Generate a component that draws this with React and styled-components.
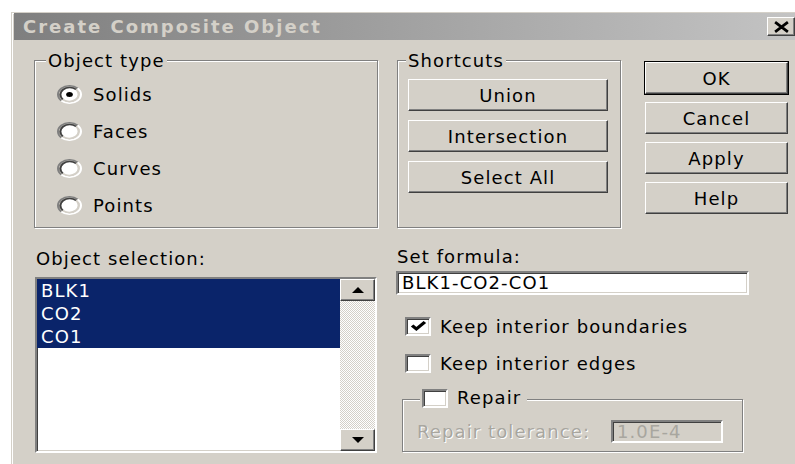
import styled, { createGlobalStyle } from "styled-components";

const GlobalStyle = createGlobalStyle`
  html, body {
    margin: 0;
    padding: 0;
    background: #fff;
    overflow: hidden;
  }
  body {
    font-family: "DejaVu Sans", Verdana, sans-serif;
    font-size: 18px;
    letter-spacing: 1.1px;
    color: #000;
  }
`;

const face = "#d4d0c8";

const raised = `
  border: 1px solid;
  border-color: #fff #404040 #404040 #fff;
  box-shadow: inset -1px -1px 0 #808080;
`;

const sunken = `
  border: 2px solid;
  border-color: #808080 #fff #fff #808080;
  box-shadow: inset 1px 1px 0 #404040, inset -1px -1px 0 ${face};
`;

const Window = styled.div`
  box-sizing: border-box;
  width: 790px;
  height: 470px;
  margin: 12px 0 0 11px;
  padding: 0 0 0 2px;
  background: ${face};
  border-top: 1px solid ${face};
  border-left: 1px solid ${face};
  box-shadow: inset 1px 1px 0 #fff;
`;

const TitleBar = styled.div`
  display: flex;
  align-items: center;
  height: 27px;
  padding-left: 9px;
  background: linear-gradient(to right, #7f7f7f, #c4c4c4);
`;

const Title = styled.span`
  color: ${face};
  font-size: 18px;
  font-weight: bold;
  letter-spacing: 2px;
`;

const CloseButton = styled.div`
  box-sizing: border-box;
  display: flex;
  align-items: center;
  justify-content: center;
  width: 28px;
  height: 19px;
  margin: 0 6px 0 auto;
  background: ${face};
  ${raised}
`;

const Body = styled.div`
  display: flex;
  flex-direction: column;
  padding: 20px 0 0 20px;
`;

const TopRow = styled.div`
  display: flex;
  align-items: flex-start;
`;

const Group = styled.div`
  box-sizing: border-box;
  width: ${(p) => p.$w}px;
  height: ${(p) => p.$h}px;
  margin: ${(p) => p.$m || "0"};
  border: 1px solid #808080;
  box-shadow: inset 1px 1px 0 #fff, 1px 1px 0 #fff;
`;

const Caption = styled.div`
  display: flex;
  align-items: center;
  gap: 9px;
  width: fit-content;
  height: 20px;
  margin: ${(p) => p.$top || -10}px 0 0 ${(p) => p.$inset}px;
  padding: 0 ${(p) => p.$pad || 2}px 0 2px;
  background: ${face};
  line-height: 20px;
`;

const RadioList = styled.div`
  display: flex;
  flex-direction: column;
  margin-top: 5px;
  padding-left: 22px;
`;

const RadioRow = styled.label`
  display: flex;
  align-items: center;
  gap: 11px;
  height: 37px;
`;

const ButtonStack = styled.div`
  display: flex;
  flex-direction: column;
  gap: ${(p) => p.$gap}px;
  margin: ${(p) => p.$m};
`;

const Button = styled.div`
  box-sizing: border-box;
  display: flex;
  align-items: center;
  justify-content: center;
  width: ${(p) => p.$w}px;
  height: 32px;
  background: ${face};
  ${raised}
  ${(p) =>
    p.$default &&
    `
    outline: 1px solid #000;
    box-shadow: inset -1px -1px 0 #808080, 1px 1px 0 #404040;
  `}
`;

const BottomRow = styled.div`
  display: flex;
  align-items: flex-start;
`;

const Column = styled.div`
  display: flex;
  flex-direction: column;
  width: ${(p) => p.$w}px;
  margin-left: ${(p) => p.$ml}px;
`;

const FieldLabel = styled.div`
  height: 20px;
  line-height: 20px;
  margin-top: ${(p) => p.$mt}px;
  padding-left: 1px;
`;

const ListBox = styled.div`
  box-sizing: border-box;
  display: flex;
  width: 342px;
  height: 176px;
  margin-top: 8px;
  background: #fff;
  ${sunken}
`;

const Items = styled.div`
  flex: 1;
  display: flex;
  flex-direction: column;
`;

const Item = styled.div`
  height: 23px;
  line-height: 23px;
  padding-left: 4px;
  background: ${(p) => (p.$selected ? "#0a246a" : "transparent")};
  color: ${(p) => (p.$selected ? "#fff" : "#000")};
`;

const ScrollBar = styled.div`
  display: flex;
  flex-direction: column;
  justify-content: space-between;
  width: 35px;
  background: repeating-conic-gradient(${face} 0 25%, #fff 0 50%) 0 0 / 2px 2px;
`;

const ScrollButton = styled.div`
  box-sizing: border-box;
  display: flex;
  align-items: center;
  justify-content: center;
  height: 22px;
  background: ${face};
  ${raised}
`;

const TextInput = styled.div`
  box-sizing: border-box;
  width: ${(p) => p.$w}px;
  height: ${(p) => p.$h}px;
  margin-top: ${(p) => p.$mt || 0}px;
  padding-left: 4px;
  line-height: ${(p) => p.$h - 4}px;
  background: ${(p) => (p.$disabled ? face : "#fff")};
  color: ${(p) => (p.$disabled ? "#a8a69f" : "#000")};
  ${sunken}
`;

const CheckRow = styled.label`
  display: flex;
  align-items: center;
  gap: 9px;
  height: 24px;
  margin-top: ${(p) => p.$mt}px;
  padding-left: ${(p) => p.$pl || 0}px;
`;

const Box = styled.span`
  box-sizing: border-box;
  display: flex;
  align-items: center;
  justify-content: center;
  width: 26px;
  height: 19px;
  background: #fff;
  ${sunken}
`;

const ToleranceRow = styled.div`
  display: flex;
  align-items: center;
  height: 24px;
  margin-top: 11px;
  padding-left: 14px;
`;

const Disabled = styled.span`
  flex: 0 0 194px;
  color: #a8a69f;
  text-shadow: 1px 1px 0 #fff;
`;

const Radio = ({ checked }) => (
  <svg width="25" height="19" viewBox="0 0 12 12" preserveAspectRatio="none">
    <circle cx="6" cy="6" r="4.2" fill="#fff" />
    <path d="M2.11 9.89 A5.5 5.5 0 0 1 9.89 2.11" fill="none" stroke="#808080" />
    <path d="M9.89 2.11 A5.5 5.5 0 0 1 2.11 9.89" fill="none" stroke="#fff" />
    <path d="M2.82 9.18 A4.5 4.5 0 0 1 9.18 2.82" fill="none" stroke="#404040" />
    <path d="M9.18 2.82 A4.5 4.5 0 0 1 2.82 9.18" fill="none" stroke={face} />
    {checked && <circle cx="6" cy="6" r="1.6" fill="#000" />}
  </svg>
);

const Check = ({ checked }) => (
  <Box>
    {checked && (
      <svg width="17" height="12" viewBox="0 0 8 7" preserveAspectRatio="none">
        <path d="M1 3.2 L3 5.2 L7 1.2" fill="none" stroke="#000" strokeWidth="1.7" />
      </svg>
    )}
  </Box>
);

const Arrow = ({ up }) => (
  <svg width="12" height="6" viewBox="0 0 12 6">
    <polygon points={up ? "6,0 12,6 0,6" : "0,0 12,0 6,6"} fill="#000" />
  </svg>
);

const types = ["Solids", "Faces", "Curves", "Points"];
const objects = ["BLK1", "CO2", "CO1"];

export default function App() {
  return (
    <>
      <GlobalStyle />
      <Window>
        <TitleBar>
          <Title>Create Composite Object</Title>
          <CloseButton>
            <svg width="17" height="12" viewBox="0 0 16 11">
              <path d="M2 1 L14 10 M14 1 L2 10" stroke="#000" strokeWidth="2.6" />
            </svg>
          </CloseButton>
        </TitleBar>

        <Body>
          <TopRow>
            <Group $w={344} $h={168}>
              <Caption $inset={11}>Object type</Caption>
              <RadioList>
                {types.map((t, i) => (
                  <RadioRow key={t}>
                    <Radio checked={i === 0} />
                    {t}
                  </RadioRow>
                ))}
              </RadioList>
            </Group>

            <Group $w={224} $h={168} $m="0 0 0 19px">
              <Caption $inset={8}>Shortcuts</Caption>
              <ButtonStack $gap={9} $m="8px 0 0 10px">
                <Button $w={200}>Union</Button>
                <Button $w={200}>Intersection</Button>
                <Button $w={200}>Select All</Button>
              </ButtonStack>
            </Group>

            <ButtonStack $gap={8} $m="2px 0 0 24px">
              <Button $w={143} $default>OK</Button>
              <Button $w={143}>Cancel</Button>
              <Button $w={143}>Apply</Button>
              <Button $w={143}>Help</Button>
            </ButtonStack>
          </TopRow>

          <BottomRow>
            <Column $w={342} $ml={1}>
              <FieldLabel $mt={21}>Object selection:</FieldLabel>
              <ListBox>
                <Items>
                  {objects.map((o) => (
                    <Item key={o} $selected>
                      {o}
                    </Item>
                  ))}
                </Items>
                <ScrollBar>
                  <ScrollButton>
                    <Arrow up />
                  </ScrollButton>
                  <ScrollButton>
                    <Arrow />
                  </ScrollButton>
                </ScrollBar>
              </ListBox>
            </Column>

            <Column $w={353} $ml={19}>
              <FieldLabel $mt={19}>Set formula:</FieldLabel>
              <TextInput $w={353} $h={24} $mt={4}>
                BLK1-CO2-CO1
              </TextInput>
              <CheckRow $mt={19} $pl={9}>
                <Check checked />
                Keep interior boundaries
              </CheckRow>
              <CheckRow $mt={13} $pl={9}>
                <Check />
                Keep interior edges
              </CheckRow>
              <Group $w={341} $h={53} $m="24px 0 0 6px">
                <Caption $inset={17} $top={-12} $pad={6}>
                  <Check />
                  Repair
                </Caption>
                <ToleranceRow>
                  <Disabled>Repair tolerance:</Disabled>
                  <TextInput $w={112} $h={23} $disabled>
                    1.0E-4
                  </TextInput>
                </ToleranceRow>
              </Group>
            </Column>
          </BottomRow>
        </Body>
      </Window>
    </>
  );
}
